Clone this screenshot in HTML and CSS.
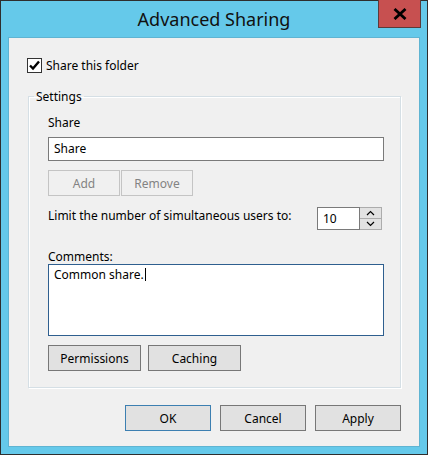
FILE: index.html
```html
<!DOCTYPE html>
<html>
<head>
<meta charset="utf-8">
<link rel="stylesheet" href="styles.css">
</head>
<body>
<div class="window">
  <div class="titlebar">
    <span class="title">Advanced Sharing</span>
    <div class="close">
      <svg width="14" height="12" viewBox="0 0 14 12"><path d="M1.5 1 L12.5 11 M12.5 1 L1.5 11" stroke="#000" stroke-width="2.8" fill="none"/></svg>
    </div>
  </div>
  <div class="client">
    <div class="check-row">
      <span class="checkbox">
        <svg width="13" height="13" viewBox="0 0 13 13"><path d="M2 6.5 L5 9.5 L11 2.5" stroke="#000" stroke-width="2.4" fill="none"/></svg>
      </span>
      <span class="check-label">Share this folder</span>
    </div>
    <fieldset class="group">
      <legend class="legend">Settings</legend>
      <div class="group-body">
        <div class="label">Share</div>
        <div class="input">Share</div>
        <div class="btn-row">
          <div class="btn small disabled">Add</div>
          <div class="btn small disabled">Remove</div>
        </div>
        <div class="limit-row">
          <span class="limit-text">Limit the number of simultaneous users to:</span>
          <div class="spinner">
            <div class="spin-value">10</div>
            <div class="spin-btns">
              <div class="spin-btn"><svg width="9" height="6" viewBox="0 0 9 6"><path d="M1 5 L4.5 1.5 L8 5" stroke="#000" stroke-width="1.2" fill="none"/></svg></div>
              <div class="spin-btn"><svg width="9" height="6" viewBox="0 0 9 6"><path d="M1 1 L4.5 4.5 L8 1" stroke="#000" stroke-width="1.2" fill="none"/></svg></div>
            </div>
          </div>
        </div>
        <div class="label comments-label">Comments:</div>
        <div class="textarea">Common share.<span class="caret"></span></div>
        <div class="btn-row wide-row">
          <div class="btn wide">Permissions</div>
          <div class="btn wide">Caching</div>
        </div>
      </div>
    </fieldset>
    <div class="footer">
      <div class="btn dlg default">OK</div>
      <div class="btn dlg">Cancel</div>
      <div class="btn dlg">Apply</div>
    </div>
  </div>
</div>
</body>
</html>
```

FILE: styles.css
```css
html, body {
  margin: 0;
  padding: 0;
}
body {
  width: 428px;
  height: 455px;
  overflow: hidden;
  font-family: "Noto Sans", "Open Sans", sans-serif;
  font-size: 12px;
  color: #000;
}
.window {
  box-sizing: border-box;
  width: 428px;
  height: 455px;
  border: 1px solid #2e2e2e;
  background: #65c9ea;
  position: relative;
  display: flex;
  flex-direction: column;
}
.titlebar {
  height: 37px;
  display: flex;
  justify-content: center;
  align-items: flex-start;
}
.title {
  font-size: 18px;
  line-height: 26px;
  padding-top: 5px;
  color: #111;
}
.close {
  position: absolute;
  top: -1px;
  right: 6px;
  width: 43px;
  height: 28px;
  box-sizing: border-box;
  background: #c75050;
  border: 1px solid #5b3a3a;
  border-top: none;
  display: flex;
  align-items: center;
  justify-content: center;
}
.client {
  margin: 0 8px 8px 8px;
  flex: 1;
  background: #f0f0f0;
  box-sizing: border-box;
  padding: 20px 18px 0 18px;
  box-shadow: 0 0 0 1px rgba(80, 120, 140, 0.25);
}
.check-row {
  display: flex;
  align-items: center;
  height: 15px;
  line-height: 15px;
}
.checkbox {
  width: 15px;
  height: 15px;
  box-sizing: border-box;
  border: 1px solid #333;
  background: #fff;
  display: flex;
  align-items: center;
  justify-content: center;
}
.check-label {
  margin-left: 4px;
}
.group {
  margin: 16px 0 0 1px;
  padding: 0;
  border: 1px solid #d5dfe5;
  box-shadow: inset 1px 1px 0 #fff, 1px 1px 0 #fff;
  min-width: 0;
}
.legend {
  margin-left: 5px;
  padding: 0 2px;
  line-height: 15px;
}
.group-body {
  padding: 11px 16px 16px 19px;
}
.label {
  line-height: 15px;
}
.input {
  margin-top: 7px;
  height: 24px;
  box-sizing: border-box;
  border: 1px solid #7a7a7a;
  background: #fff;
  padding-left: 5px;
  line-height: 21px;
}
.btn-row {
  display: flex;
  gap: 1px;
  margin-top: 9px;
}
.btn {
  height: 26px;
  box-sizing: border-box;
  border: 1px solid #adadad;
  background: #e1e1e1;
  display: flex;
  align-items: center;
  justify-content: center;
  line-height: 15px;
}
.btn.small {
  width: 72px;
}
.btn.disabled {
  background: #f0f0f0;
  border-color: #c4c4c4;
  color: #838383;
}
.limit-row {
  margin-top: 11px;
  display: flex;
  justify-content: space-between;
  align-items: flex-start;
  padding-right: 2px;
}
.limit-text {
  line-height: 15px;
  margin-top: 1px;
}
.spinner {
  display: flex;
  height: 23px;
}
.spin-value {
  width: 43px;
  box-sizing: border-box;
  border: 1px solid #7a7a7a;
  background: #fff;
  padding-left: 5px;
  line-height: 22px;
}
.spin-btns {
  width: 22px;
  box-sizing: border-box;
  border: 1px solid #acacac;
  border-left: none;
  display: flex;
  flex-direction: column;
  gap: 1px;
  background: #acacac;
}
.spin-btn {
  flex: 1;
  background: #e2e2e2;
  display: flex;
  align-items: center;
  justify-content: center;
}
.comments-label {
  margin-top: 19px;
}
.textarea {
  height: 72px;
  box-sizing: border-box;
  border: 1px solid #2f5f8f;
  background: #fff;
  padding: 2px 5px;
  line-height: 16px;
}
.caret {
  display: inline-block;
  width: 1px;
  height: 13px;
  background: #000;
  vertical-align: -2px;
  margin-left: 1px;
}
.wide-row {
  gap: 7px;
}
.btn.wide {
  width: 93px;
  border-color: #777;
}
.footer {
  display: flex;
  justify-content: flex-end;
  gap: 9px;
  margin-top: 17px;
}
.btn.dlg {
  width: 86px;
  border-color: #777;
}
.btn.dlg.default {
  border-color: #3c7fb1;
}
```
